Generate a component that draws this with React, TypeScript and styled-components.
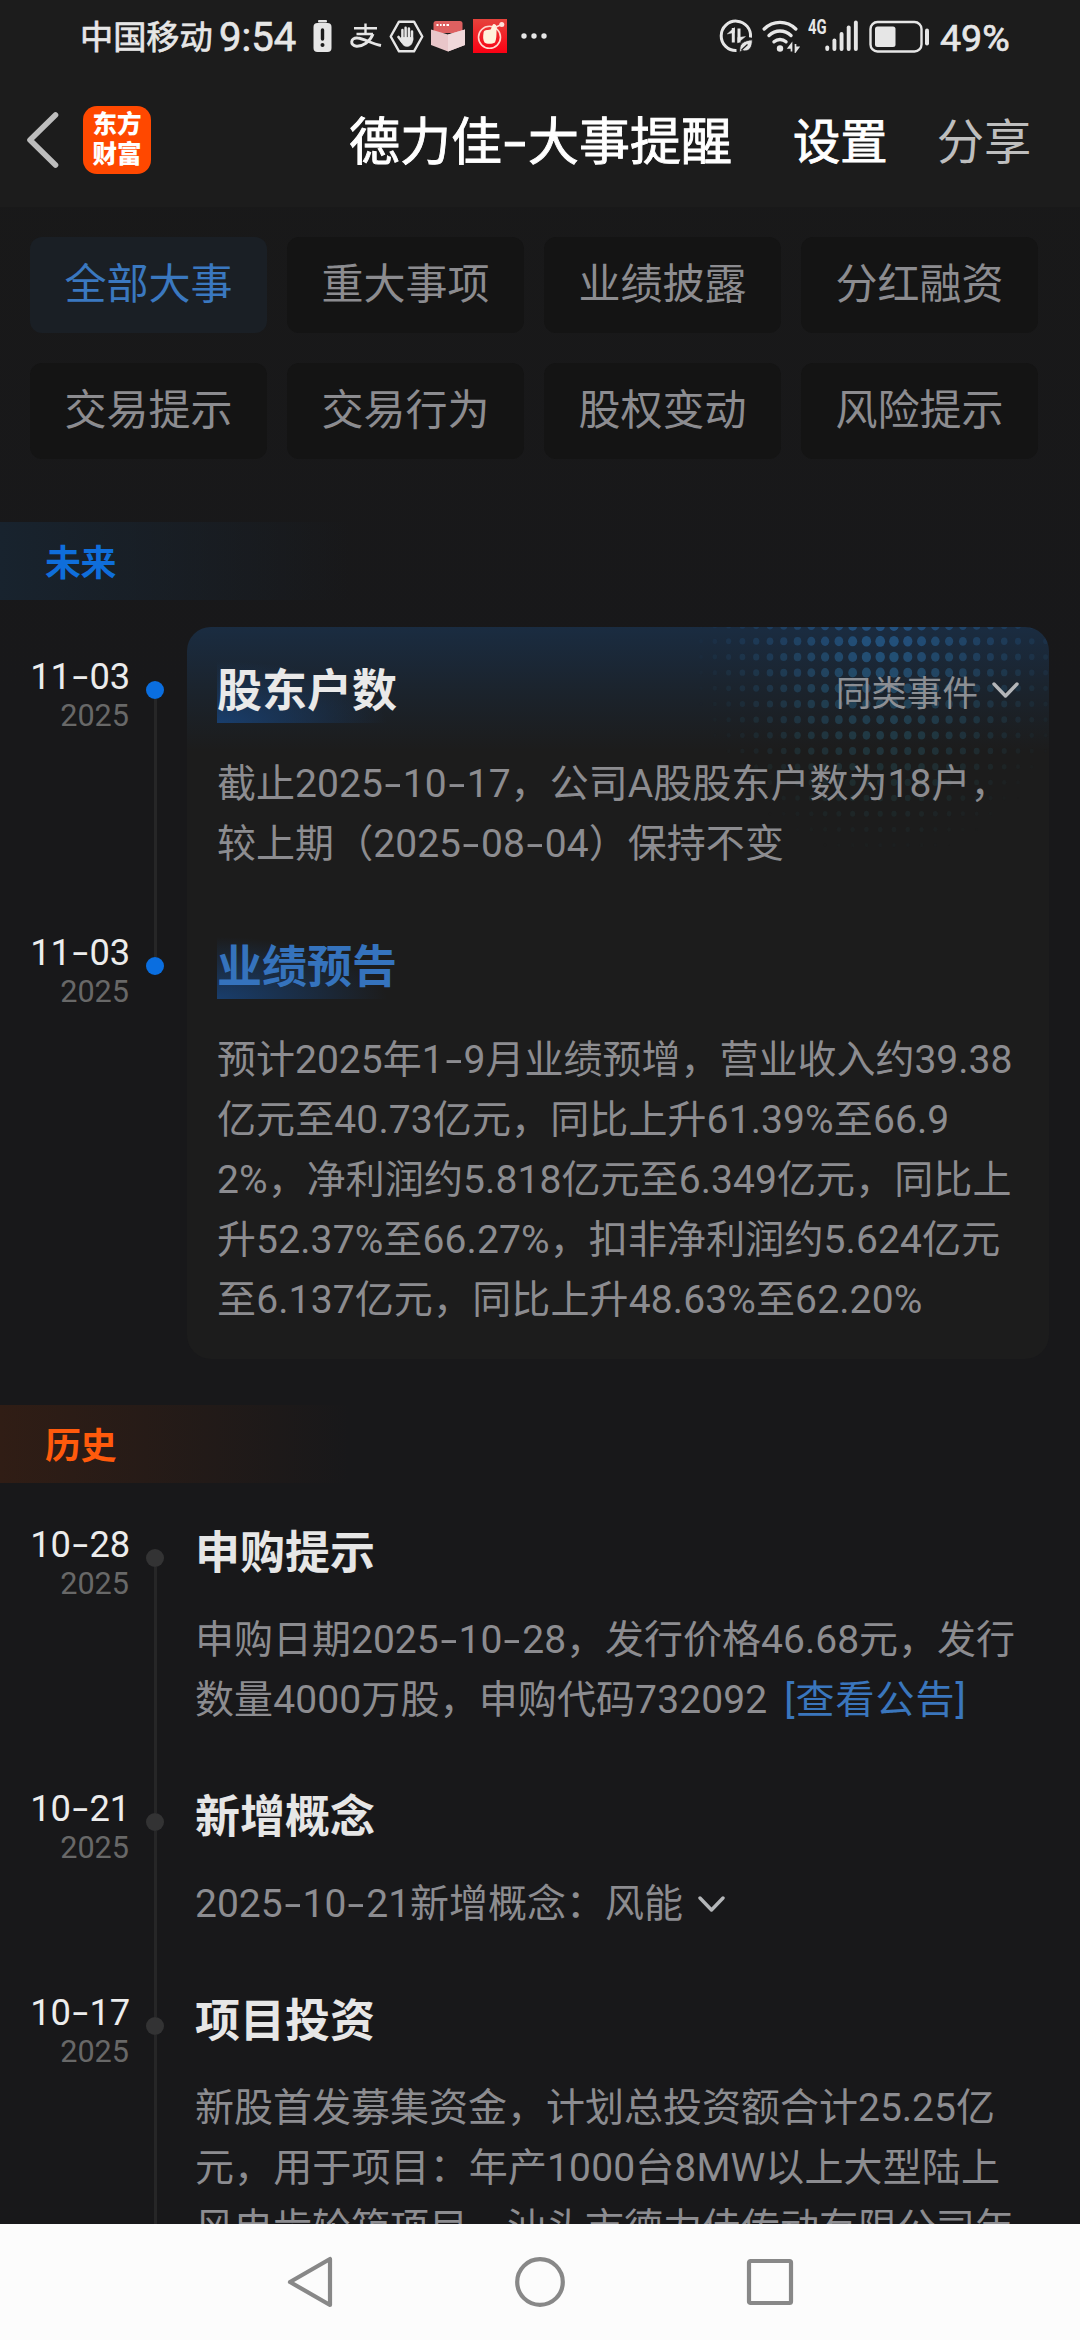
import React from "react";
import styled, { createGlobalStyle } from "styled-components";

const GlobalStyle = createGlobalStyle`
  * { box-sizing: border-box; }
  html, body { margin: 0; padding: 0; background: #18181a; }
  body { font-family: Roboto, "Noto Sans CJK SC", sans-serif; }
  svg { display: block; flex: none; }
`;

const INK = "#e6e6e6";

const Screen = styled.div`
  width: 1080px;
  height: 2340px;
  display: flex;
  flex-direction: column;
  overflow: hidden;
  background: linear-gradient(#191919, #18181a 700px);
`;

const TopArea = styled.header`
  flex: none;
  height: 207px;
  background: #1c1c1c;
`;

const StatusBar = styled.div`
  height: 72px;
  display: flex;
  align-items: center;
  padding-left: 80px;
  color: ${INK};
`;

const Slot = styled.span<{ $ml: number }>`
  flex: none;
  margin-left: ${(p) => p.$ml}px;
`;

const StatusText = styled.span<{ $size: number; $ml?: number; $w: number; $top?: number }>`
  flex: none;
  width: ${(p) => p.$w}px;
  margin-left: ${(p) => p.$ml ?? 0}px;
  padding-top: ${(p) => p.$top ?? 0}px;
  font-size: ${(p) => p.$size}px;
  line-height: 48px;
  white-space: nowrap;
  -webkit-text-stroke: 0.7px currentColor;
`;

const NavBar = styled.div`
  height: 135px;
  display: flex;
  align-items: center;
  padding-left: 25px;
`;

const Logo = styled.div`
  flex: none;
  width: 68px;
  height: 68px;
  margin-left: 24px;
  border-radius: 14px;
  background: #ff4800;
  color: #fff;
  font-family: "Noto Sans CJK SC", sans-serif;
  font-weight: 900;
  font-size: 24.5px;
  line-height: 30px;
  padding-top: 2px;
  text-align: center;
`;

const BarText = styled.span<{ $size: number; $ml: number; $color: string; $stroke?: number }>`
  flex: none;
  margin-left: ${(p) => p.$ml}px;
  padding-top: 6px;
  font-size: ${(p) => p.$size}px;
  line-height: 60px;
  color: ${(p) => p.$color};
  -webkit-text-stroke: ${(p) => p.$stroke ?? 0}px currentColor;
  white-space: nowrap;
`;

const Main = styled.main`
  flex: 1;
  min-height: 0;
  overflow: hidden;
`;

const Chips = styled.div`
  display: grid;
  grid-template-columns: repeat(4, 237px);
  gap: 30px 20px;
  padding: 30px 0 63px 30px;
`;

const Chip = styled.button<{ $active?: boolean }>`
  height: 96px;
  border: 0;
  border-radius: 12px;
  padding: 0;
  font: 400 42px/94px Roboto, "Noto Sans CJK SC", sans-serif;
  color: ${(p) => (p.$active ? "#3a78c0" : "#8c8c90")};
  background: ${(p) => (p.$active ? "#1a1f25" : "#141414")};
`;

const Banner = styled.h2<{ $tone: "blue" | "orange" }>`
  height: 78px;
  margin: 0;
  padding: 1px 0 0 45px;
  font-size: 36px;
  line-height: 82px;
  font-weight: 700;
  letter-spacing: -0.5px;
  color: ${(p) => (p.$tone === "blue" ? "#0f6edb" : "#ff5a0c")};
  background: linear-gradient(90deg, ${(p) => (p.$tone === "blue" ? "#18232e" : "#301d15")}, rgba(24, 24, 26, 0) 350px);
`;

const Section = styled.section<{ $top: number; $bottom?: number }>`
  padding-top: ${(p) => p.$top}px;
  padding-bottom: ${(p) => p.$bottom ?? 0}px;
`;

const Row = styled.article`
  display: flex;
`;

const DateCol = styled.div<{ $top: number }>`
  flex: none;
  width: 130px;
  padding-top: ${(p) => p.$top}px;
  text-align: right;
  white-space: nowrap;
`;

const Day = styled.div`
  font-size: 36.3px;
  line-height: 40px;
  letter-spacing: -0.1px;
  color: #ececec;
`;

const Year = styled.div`
  padding-right: 1px;
  font-size: 30.6px;
  line-height: 38px;
  color: #686868;
`;

const Rail = styled.div`
  flex: none;
  width: 18px;
  margin-left: 16px;
  display: flex;
  flex-direction: column;
  align-items: center;
`;

const Segment = styled.div<{ $height?: number; $hidden?: boolean }>`
  width: 3px;
  ${(p) => (p.$height ? `height: ${p.$height}px; flex: none;` : "flex: 1;")}
  background: ${(p) => (p.$hidden ? "transparent" : "#262627")};
`;

const Dot = styled.div<{ $color: string }>`
  flex: none;
  width: 18px;
  height: 18px;
  border-radius: 50%;
  background: ${(p) => p.$color};
`;

const CardSlice = styled.div<{ $first?: boolean; $last?: boolean }>`
  position: relative;
  width: 862px;
  margin-left: 23px;
  padding: 30px 30px 29px;
  overflow: hidden;
  border-radius: ${(p) => (p.$first ? "24px 24px" : "0 0")} ${(p) => (p.$last ? "24px 24px" : "0 0")};
  background: ${(p) => (p.$first ? "linear-gradient(#1a2c41, #1b232c 66px, #1c1c1c 124px)" : "#1c1c1c")};
`;

const HalftoneLayer = styled.svg`
  position: absolute;
  inset: 0;
`;

const CardHead = styled.div`
  position: relative;
  display: flex;
  justify-content: space-between;
  height: 66px;
  margin-bottom: 31px;
`;

const CardTitle = styled.h3<{ $link?: boolean }>`
  margin: 0;
  width: 180px;
  padding-top: 4px;
  font-size: 45px;
  line-height: 62px;
  font-weight: 700;
  white-space: nowrap;
  color: ${(p) => (p.$link ? "#3573bd" : "#e9e9e9")};
  background: radial-gradient(ellipse 170px 62px at 0 100%, rgba(24, 70, 128, 0.8), rgba(24, 70, 128, 0) 100%);
`;

const SimilarLink = styled.span`
  display: flex;
  align-items: center;
  gap: 14px;
  height: 66px;
  font-size: 35.6px;
  color: #8c8f94;
`;

const Body = styled.div`
  position: relative;
  font-size: 39px;
  line-height: 60px;
  color: #8c8c90;
`;

const Line = styled.div<{ $spacing?: number }>`
  display: flex;
  align-items: center;
  white-space: pre;
  letter-spacing: ${(p) => p.$spacing ?? 0}px;
`;

const Dash = styled.span`
  display: inline-block;
  width: 0.51em;
  text-align: center;
  letter-spacing: 0;
  transform: scaleX(1.55);
`;

const Entry = styled.div`
  margin-left: 31px;
  padding-bottom: 57px;
`;

const EntryTitle = styled.h3`
  margin: 0;
  padding-top: 1px;
  height: 87px;
  font-size: 45px;
  line-height: 60px;
  font-weight: 700;
  color: #e6e6e6;
`;

const Link = styled.a`
  color: #3a76bd;
  letter-spacing: 1px;
`;

const Inset = styled.span<{ $ml: number }>`
  margin-left: ${(p) => p.$ml}px;
`;

const SystemNav = styled.footer`
  flex: none;
  height: 116px;
  background: #fcfcfc;
  display: flex;
  justify-content: center;
  align-items: center;
  gap: 177px;
`;

/* The hyphen is drawn wider than the font's own, so it gets its own cell. */
function T({ children }: { children: string }) {
  const parts = children.split("-");
  return (
    <span>
      {parts.map((p, i) => (
        <React.Fragment key={i}>
          {i > 0 && <Dash>-</Dash>}
          {p}
        </React.Fragment>
      ))}
    </span>
  );
}

function Chevron() {
  return (
    <svg width="27" height="18" viewBox="0 0 27 18" fill="none" stroke="#b4b6b9" strokeWidth="3.4" strokeLinecap="round" strokeLinejoin="round">
      <path d="M2 3 L13.5 15 L25 3" />
    </svg>
  );
}

function Halftone() {
  const dots: React.ReactNode[] = [];
  for (let r = 0; r < 15; r++) {
    for (let c = -14; c <= 12; c++) {
      const x = 693.2 + c * 13.78;
      const y = -1.4 + r * 15.68;
      const d = Math.hypot((x - 697) / 195, (y - 12) / 220);
      if (d >= 1) continue;
      const k = 1 - d;
      const mix = Math.min(1, y / 150);
      const red = Math.round(38 + 2 * mix);
      const green = Math.round(94 - 8 * mix);
      const blue = Math.round(148 - 54 * mix);
      dots.push(
        <ellipse
          key={`${r}_${c}`}
          cx={x}
          cy={y}
          rx={1.2 + 3.7 * Math.pow(k, 0.6)}
          ry={1.4 + 4.1 * Math.pow(k, 0.6)}
          fill={`rgb(${red},${green},${blue})`}
          opacity={Math.min(0.75, 0.82 * Math.pow(k, 0.95))}
        />
      );
    }
  }
  return (
    <HalftoneLayer width="862" height="276" viewBox="0 0 862 276">
      {dots}
    </HalftoneLayer>
  );
}

function BatteryAlert() {
  return (
    <svg width="19" height="34" viewBox="0 0 19 34">
      <rect x="5" y="1" width="9" height="2.4" rx="1" fill={INK} />
      <rect x="0.5" y="4" width="18" height="29" rx="4" fill={INK} />
      <path d="M9.5 11 V20" stroke="#1c1c1c" strokeWidth="3.4" strokeLinecap="round" />
      <circle cx="9.5" cy="26" r="2" fill="#1c1c1c" />
    </svg>
  );
}

function PayMark() {
  return (
    <svg width="32" height="26" viewBox="0 0 32 26" fill="none" stroke={INK} strokeWidth="2.4">
      <path d="M4 5.2 H27 M15.5 0.5 V10.5 M6.5 11 H23" />
      <path d="M23 11 C20 19 12.5 23.5 6.5 23.2 C-0.5 22.5 0.5 14.3 7.5 15 C14 15.5 21 20.5 31 22.5" strokeWidth="2.9" />
    </svg>
  );
}

function HandHex() {
  return (
    <svg width="35" height="33" viewBox="0 0 35 33" fill="none" stroke={INK} strokeLinecap="round" strokeLinejoin="round">
      <path d="M10 1.7 H25 L33.3 16.5 L25 31.3 H10 L1.7 16.5 Z" strokeWidth="2.4" />
      <path d="M13.4 10 V18 M16.6 7.7 V18 M19.9 8.5 V18 M23 11.5 V20" strokeWidth="2.5" />
      <path d="M9.5 17 L13 21.5" strokeWidth="2.7" />
      <path d="M12.5 17.5 H23.8 C24 23 22 26.3 18 26.3 C14.5 26.3 13.5 24 11.7 21 Z" fill={INK} strokeWidth="0.8" />
    </svg>
  );
}

function GiftBox() {
  return (
    <svg width="34" height="32" viewBox="0 0 34 32">
      <path d="M2.5 3.5 Q2.5 1 5 1 H29 Q31.5 1 31.5 3.5 V13 H2.5 Z" fill="#dd6060" />
      <path d="M5.5 5 h2 M9 5 h1.6 M12 5 h2 M15.5 5 h2.5" stroke="#fff" strokeWidth="2.2" />
      <path d="M0 9.5 L17 14.5 L34 9.5 V25 L17 31.5 L0 25 Z" fill="#e9c6c9" />
      <path d="M17 14.5 L34 9.5 V25 L17 31.5 Z" fill="#f0d8da" />
    </svg>
  );
}

function RedApp() {
  return (
    <svg width="34" height="34" viewBox="0 0 34 34">
      <defs>
        <linearGradient id="redapp" x1="0" y1="0" x2="0" y2="1">
          <stop offset="0" stopColor="#e5433c" />
          <stop offset="1" stopColor="#fb0013" />
        </linearGradient>
      </defs>
      <rect width="34" height="34" fill="url(#redapp)" />
      <circle cx="16.5" cy="18.3" r="11" fill="none" stroke="#ffd9cf" strokeWidth="1.6" />
      <path d="M10.5 14 C11 10 14 11.5 17.5 10.5 C19 9.5 18.5 5.5 21 5 C23.5 5.5 24.5 8 23.5 11.5 C23.5 16 23.5 20 22 23.5 C19 25.5 13 25 11.5 23.5 C9.8 20.5 10 17.5 10.5 14 Z" fill="#fff3dc" />
      <path d="M22 8.5 L28.5 5.5" stroke="#ffe2da" strokeWidth="1.4" />
      <circle cx="28.8" cy="5.5" r="2.5" fill="#ffe2da" />
    </svg>
  );
}

function Ellipsis() {
  return (
    <svg width="26" height="8" viewBox="0 0 26 8" fill={INK}>
      <circle cx="3" cy="4" r="2.7" />
      <circle cx="13" cy="4" r="2.7" />
      <circle cx="23" cy="4" r="2.7" />
    </svg>
  );
}

function DataSaver() {
  return (
    <svg width="34" height="34" viewBox="0 0 34 34" fill="none" stroke={INK}>
      <path d="M17.5 31.5 A14.7 14.7 0 1 1 31.5 18.5" strokeWidth="3" />
      <path d="M14.3 9 V23.5 M20 9.5 V23.5" strokeWidth="3" />
      <path d="M15.5 8.5 L8.2 15 L15.5 13.5 Z M18.7 24 L26.5 17.5 L18.7 18.5 Z" fill={INK} strokeWidth="0.4" />
      <path d="M33.3 20.8 C25 21.5 20.8 24.5 20.8 30 L20.5 33.5 L23 31.5 C30.5 33.5 33.5 28 33.3 20.8 Z" fill={INK} stroke="#1c1c1c" strokeWidth="0.8" />
      <path d="M22.5 31 L28.5 25.5" stroke="#1c1c1c" strokeWidth="1.2" />
    </svg>
  );
}

function Wifi() {
  return (
    <svg width="38" height="33" viewBox="0 0 38 33" fill="none" stroke={INK} strokeLinecap="round">
      <path d="M2.2 9 C11 0.2 25 0.2 33.8 9" strokeWidth="3.4" />
      <path d="M7 15.5 C13.5 9.5 22.5 9.5 29 15.5" strokeWidth="3.4" />
      <path d="M12 21.8 C15.5 18.8 20.5 18.8 24 21.8" strokeWidth="3.4" />
      <circle cx="18" cy="28.5" r="3.2" fill={INK} stroke="none" />
      <path d="M29.5 24 V31.5 L29.5 24 L26.5 28 H29.5 M33.5 24 V31.5 L36.5 27.3 H33.5" strokeWidth="1.7" strokeLinecap="butt" fill={INK} />
    </svg>
  );
}

const Network = styled.span`
  flex: none;
  align-self: flex-start;
  width: 18px;
  margin: 17px 0 0 8px;
  font: 700 19.5px/22px Roboto, sans-serif;
  transform: scaleX(0.76);
  transform-origin: 0 0;
`;

function Signal() {
  const tops = [25.5, 18.5, 12, 5.5, 0.5];
  return (
    <svg width="33" height="32" viewBox="0 0 33 32" fill={INK}>
      {tops.map((t, i) => (
        <rect key={t} x={0.3 + i * 7.15} y={t} width="3.9" height={31 - t} rx="1.9" />
      ))}
    </svg>
  );
}

function Battery() {
  return (
    <svg width="61" height="33" viewBox="0 0 61 33">
      <rect x="1.5" y="2" width="51" height="29.5" rx="7" fill="none" stroke={INK} strokeWidth="2.4" />
      <rect x="6" y="6.5" width="20.5" height="20.5" rx="2.5" fill={INK} />
      <rect x="56" y="8.5" width="4" height="17" rx="2" fill={INK} />
    </svg>
  );
}

type RowData = { day: string; title: string; body: React.ReactNode };

const future: (RowData & { link?: boolean })[] = [
  {
    day: "11-03",
    title: "股东户数",
    body: (
      <>
        <Line $spacing={0.05}><T>截止2025-10-17，公司A股股东户数为18户，</T></Line>
        <Line $spacing={0.05}><T>较上期（2025-08-04）保持不变</T></Line>
      </>
    ),
  },
  {
    day: "11-03",
    title: "业绩预告",
    link: true,
    body: (
      <>
        <Line><T>预计2025年1-9月业绩预增，营业收入约39.38</T></Line>
        <Line $spacing={0.11}><T>亿元至40.73亿元，同比上升61.39%至66.9</T></Line>
        <Line $spacing={0.08}><T>2%，净利润约5.818亿元至6.349亿元，同比上</T></Line>
        <Line $spacing={0.12}><T>升52.37%至66.27%，扣非净利润约5.624亿元</T></Line>
        <Line $spacing={0.13}><T>至6.137亿元，同比上升48.63%至62.20%</T></Line>
      </>
    ),
  },
];

const history: RowData[] = [
  {
    day: "10-28",
    title: "申购提示",
    body: (
      <>
        <Line><T>申购日期2025-10-28，发行价格46.68元，发行</T></Line>
        <Line $spacing={0.11}>
          <T>数量4000万股，申购代码732092</T>
          <Inset $ml={17}><Link>[查看公告]</Link></Inset>
        </Line>
      </>
    ),
  },
  {
    day: "10-21",
    title: "新增概念",
    body: (
      <Line>
        <T>2025-10-21新增概念：风能</T>
        <Inset $ml={15}><Chevron /></Inset>
      </Line>
    ),
  },
  {
    day: "10-17",
    title: "项目投资",
    body: (
      <>
        <Line><T>新股首发募集资金，计划总投资额合计25.25亿</T></Line>
        <Line $spacing={0.12}><T>元，用于项目：年产1000台8MW以上大型陆上</T></Line>
        <Line><T>风电齿轮箱项目，汕头市德力佳传动有限公司年</T></Line>
      </>
    ),
  },
];

const chips = ["全部大事", "重大事项", "业绩披露", "分红融资", "交易提示", "交易行为", "股权变动", "风险提示"];

export default function App() {
  return (
    <>
      <GlobalStyle />
      <Screen>
        <TopArea>
          <StatusBar>
            <StatusText $size={33.2} $w={134} $top={3}>中国移动</StatusText>
            <StatusText $size={40} $w={78} $ml={5} $top={3}>9:54</StatusText>
            <Slot $ml={16}><BatteryAlert /></Slot>
            <Slot $ml={18}><PayMark /></Slot>
            <Slot $ml={7}><HandHex /></Slot>
            <Slot $ml={7}><GiftBox /></Slot>
            <Slot $ml={8}><RedApp /></Slot>
            <Slot $ml={14}><Ellipsis /></Slot>
            <Slot $ml={172}><DataSaver /></Slot>
            <Slot $ml={9}><Wifi /></Slot>
            <Network>4G</Network>
            <Slot $ml={-1}><Signal /></Slot>
            <Slot $ml={11}><Battery /></Slot>
            <StatusText $size={37.5} $w={76} $ml={10} $top={3}>49%</StatusText>
          </StatusBar>
          <NavBar>
            <svg width="34" height="58" viewBox="0 0 34 58" fill="none" stroke="#bdbdbd" strokeWidth="5.6" strokeLinecap="round" strokeLinejoin="round">
              <path d="M30.5 4 L5 29 L30.5 54" />
            </svg>
            <Logo>东方<br />财富</Logo>
            <BarText $size={51} $ml={198} $color="#fff" $stroke={0.9}><T>德力佳-大事提醒</T></BarText>
            <BarText $size={47.3} $ml={61} $color="#fff" $stroke={0.9}>设置</BarText>
            <BarText $size={47.3} $ml={49} $color="#bebebe">分享</BarText>
          </NavBar>
        </TopArea>

        <Main>
          <Chips>
            {chips.map((c, i) => (
              <Chip key={c} $active={i === 0}>{c}</Chip>
            ))}
          </Chips>

          <Banner $tone="blue">未来</Banner>
          <Section $top={27} $bottom={46}>
            {future.map((r, i) => (
              <Row key={r.title}>
                <DateCol $top={30}>
                  <Day><T>{r.day}</T></Day>
                  <Year>2025</Year>
                </DateCol>
                <Rail>
                  <Segment $height={54} $hidden={i === 0} />
                  <Dot $color="#0a6ee0" />
                  <Segment $hidden={i === future.length - 1} />
                </Rail>
                <CardSlice $first={i === 0} $last={i === future.length - 1}>
                  {i === 0 && <Halftone />}
                  <CardHead>
                    <CardTitle $link={r.link}>{r.title}</CardTitle>
                    {i === 0 && (
                      <SimilarLink>
                        同类事件
                        <Chevron />
                      </SimilarLink>
                    )}
                  </CardHead>
                  <Body>{r.body}</Body>
                </CardSlice>
              </Row>
            ))}
          </Section>

          <Banner $tone="orange">历史</Banner>
          <Section $top={40}>
            {history.map((r, i) => (
              <Row key={r.title}>
                <DateCol $top={2}>
                  <Day><T>{r.day}</T></Day>
                  <Year>2025</Year>
                </DateCol>
                <Rail>
                  <Segment $height={26} $hidden={i === 0} />
                  <Dot $color="#333334" />
                  <Segment />
                </Rail>
                <Entry>
                  <EntryTitle>{r.title}</EntryTitle>
                  <Body>{r.body}</Body>
                </Entry>
              </Row>
            ))}
          </Section>
        </Main>

        <SystemNav>
          <svg width="52" height="54" viewBox="0 0 52 54" fill="none" stroke="#888" strokeWidth="4.2" strokeLinejoin="round">
            <path d="M46 4 V50 L6 27 Z" />
          </svg>
          <svg width="54" height="54" viewBox="0 0 54 54" fill="none" stroke="#888" strokeWidth="4.2">
            <circle cx="27" cy="27" r="22.8" />
          </svg>
          <svg width="52" height="54" viewBox="0 0 52 54" fill="none" stroke="#888" strokeWidth="4.2" strokeLinejoin="round">
            <rect x="5" y="6" width="42" height="42" rx="1.5" />
          </svg>
        </SystemNav>
      </Screen>
    </>
  );
}
